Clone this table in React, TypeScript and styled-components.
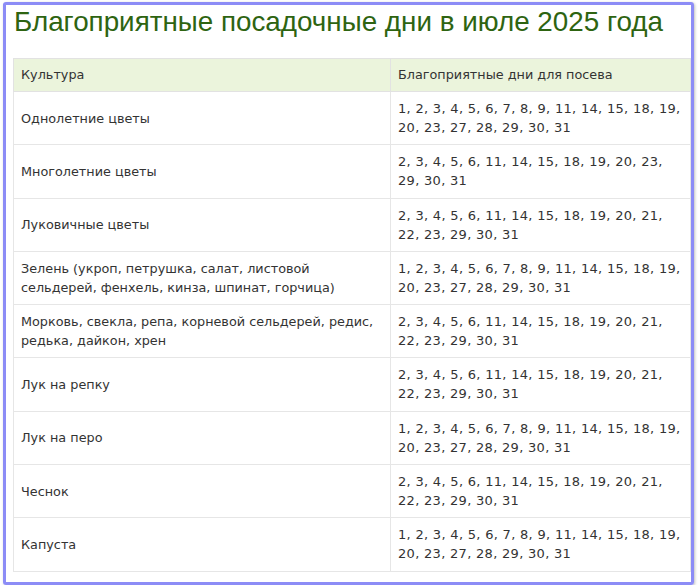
import React from 'react';
import styled, { createGlobalStyle } from 'styled-components';

const GlobalStyle = createGlobalStyle`
  html, body {
    margin: 0;
    padding: 0;
    background: #ffffff;
  }
`;

const Frame = styled.div`
  box-sizing: border-box;
  margin: 2px 0 0 3px;
  width: 691px;
  height: 583px;
  border: 3px solid #8c8cf6;
  border-radius: 3px;
  box-shadow: 1px 1px 3px rgba(0, 0, 0, 0.25);
  padding: 0 0 0 7px;
  overflow: hidden;
`;

const Title = styled.h1`
  margin: 1px 0 20px 1px;
  font-family: 'Liberation Sans', Arial, sans-serif;
  font-size: 27.8px;
  line-height: 32px;
  font-weight: normal;
  color: #2e6411;
  white-space: nowrap;
`;

const Table = styled.table`
  width: 678px;
  border-collapse: collapse;
  font-family: 'DejaVu Sans', Verdana, sans-serif;
  font-size: 12.8px;
  color: #333333;
`;

const HeadCell = styled.th`
  text-align: left;
  font-weight: normal;
  background: #ebf4dc;
  border: 1px solid #e2e2e2;
  padding: 7px 7px;
  line-height: 18px;
`;

const Cell = styled.td<{ $days?: boolean }>`
  border: 1px solid #e6e6e6;
  padding: 7px 7px 7.3px;
  line-height: 19px;
  vertical-align: middle;
  width: ${(p) => (p.$days ? 'auto' : '362px')};
  font-size: ${(p) => (p.$days ? '13px' : '12.8px')};
  letter-spacing: ${(p) => (p.$days ? '0.3px' : '0')};
`;

const rows: [string, string][] = [
  ['Однолетние цветы', '1, 2, 3, 4, 5, 6, 7, 8, 9, 11, 14, 15, 18, 19, 20, 23, 27, 28, 29, 30, 31'],
  ['Многолетние цветы', '2, 3, 4, 5, 6, 11, 14, 15, 18, 19, 20, 23, 29, 30, 31'],
  ['Луковичные цветы', '2, 3, 4, 5, 6, 11, 14, 15, 18, 19, 20, 21, 22, 23, 29, 30, 31'],
  [
    'Зелень (укроп, петрушка, салат, листовой сельдерей, фенхель, кинза, шпинат, горчица)',
    '1, 2, 3, 4, 5, 6, 7, 8, 9, 11, 14, 15, 18, 19, 20, 23, 27, 28, 29, 30, 31',
  ],
  [
    'Морковь, свекла, репа, корневой сельдерей, редис, редька, дайкон, хрен',
    '2, 3, 4, 5, 6, 11, 14, 15, 18, 19, 20, 21, 22, 23, 29, 30, 31',
  ],
  ['Лук на репку', '2, 3, 4, 5, 6, 11, 14, 15, 18, 19, 20, 21, 22, 23, 29, 30, 31'],
  ['Лук на перо', '1, 2, 3, 4, 5, 6, 7, 8, 9, 11, 14, 15, 18, 19, 20, 23, 27, 28, 29, 30, 31'],
  ['Чеснок', '2, 3, 4, 5, 6, 11, 14, 15, 18, 19, 20, 21, 22, 23, 29, 30, 31'],
  ['Капуста', '1, 2, 3, 4, 5, 6, 7, 8, 9, 11, 14, 15, 18, 19, 20, 23, 27, 28, 29, 30, 31'],
];

const App: React.FC = () => (
  <>
    <GlobalStyle />
    <Frame>
      <Title>Благоприятные посадочные дни в июле 2025 года</Title>
      <Table>
        <thead>
          <tr>
            <HeadCell>Культура</HeadCell>
            <HeadCell>Благоприятные дни для посева</HeadCell>
          </tr>
        </thead>
        <tbody>
          {rows.map(([crop, days]) => (
            <tr key={crop}>
              <Cell>{crop}</Cell>
              <Cell $days>{days}</Cell>
            </tr>
          ))}
        </tbody>
      </Table>
    </Frame>
  </>
);

export default App;
